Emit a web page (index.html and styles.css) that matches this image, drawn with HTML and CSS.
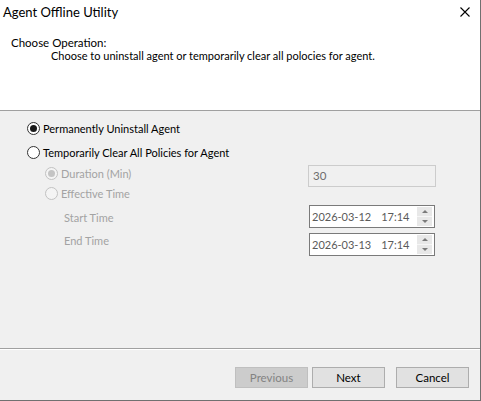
FILE: index.html
```html
<!DOCTYPE html>
<html>
<head>
<meta charset="utf-8">
<link rel="stylesheet" href="styles.css">
</head>
<body>
<div class="window">
  <div class="header">
    <div class="titlebar">
      <span class="title">Agent Offline Utility</span>
      <svg class="close" width="10" height="10" viewBox="0 0 10 10"><path d="M0.5 0.5 L9.5 9.5 M9.5 0.5 L0.5 9.5" stroke="#000" stroke-width="1.1" fill="none"/></svg>
    </div>
    <div class="heading">Choose Operation:</div>
    <div class="subheading">Choose to uninstall agent or temporarily clear all polocies for agent.</div>
  </div>
  <div class="content">
    <div class="left-col">
      <div class="row r1"><span class="radio checked"></span><span class="label">Permanently Uninstall Agent</span></div>
      <div class="row r2"><span class="radio"></span><span class="label">Temporarily Clear All Policies for Agent</span></div>
      <div class="row sub r3 disabled"><span class="radio checked"></span><span class="label">Duration (Min)</span></div>
      <div class="row sub r4 disabled"><span class="radio"></span><span class="label">Effective Time</span></div>
      <div class="row field r5 disabled"><span class="label">Start Time</span></div>
      <div class="row field r6 disabled"><span class="label">End Time</span></div>
    </div>
    <div class="right-col">
      <div class="textbox">30</div>
      <div class="datebox start"><span class="date">2026-03-12</span><span class="time">17:14</span><span class="spin"><span class="up"></span><span class="down"></span></span></div>
      <div class="datebox end"><span class="date">2026-03-13</span><span class="time">17:14</span><span class="spin"><span class="up"></span><span class="down"></span></span></div>
    </div>
  </div>
  <div class="footer">
    <button class="btn disabled">Previous</button>
    <button class="btn next">Next</button>
    <button class="btn cancel">Cancel</button>
  </div>
</div>
</body>
</html>
```

FILE: styles.css
```css
* { box-sizing: border-box; }
html, body { margin: 0; padding: 0; }
body {
  width: 481px;
  height: 401px;
  overflow: hidden;
  font-family: Lato, "Liberation Sans", sans-serif;
  font-size: 11px;
  color: #000;
  background: #f0f0f0;
}
.window {
  width: 481px;
  height: 401px;
  border-right: 1px solid #707070;
  border-bottom: 1px solid #707070;
  display: flex;
  flex-direction: column;
  background: #f0f0f0;
}
.header {
  height: 111px;
  flex: none;
  background: #fff;
  border-bottom: 1px solid #a0a0a0;
}
.titlebar {
  height: 24px;
  display: flex;
  align-items: center;
  justify-content: space-between;
  padding-left: 3px;
  padding-right: 10px;
}
.title { font-size: 13px; line-height: 16px; }
.close { display: block; }
.heading {
  margin-top: 12px;
  padding-left: 11px;
  line-height: 13px;
  font-size: 11.5px;
}
.subheading {
  padding-left: 51px;
  line-height: 13px;
  font-size: 11px;
}
.content {
  height: 237px;
  flex: none;
  display: flex;
  padding-left: 27px;
}
.left-col { padding-top: 7px; }
.row {
  display: flex;
  align-items: center;
  height: 20px;
  white-space: nowrap;
}
.r1 { height: 21px; }
.r2 { height: 21px; margin-top: 3px; }
.r3 { margin-top: 0; }
.r5 { margin-top: 4px; }
.r6 { margin-top: 3px; }
.sub { padding-left: 18px; }
.field { padding-left: 37px; }
.label { font-size: 11px; }
.radio {
  position: relative;
  width: 13px;
  height: 13px;
  border-radius: 50%;
  border: 1px solid #333;
  background: #fff;
  flex: none;
  margin-right: 3px;
}
.radio.checked::after {
  content: "";
  position: absolute;
  left: 2px;
  top: 2px;
  width: 7px;
  height: 7px;
  border-radius: 50%;
  background: #1a1a1a;
}
.disabled .label { color: #a3a3a3; }
.disabled .radio { border-color: #c2c2c2; background: #f4f4f4; }
.disabled .radio.checked::after { background: #c4c4c4; }
.right-col {
  margin-left: auto;
  margin-right: 44px;
  width: 128px;
}
.textbox {
  margin-top: 54px;
  height: 22px;
  border: 1px solid #cccccc;
  background: #f0f0f0;
  color: #6d6d6d;
  padding-left: 4px;
  line-height: 20px;
  font-size: 11.5px;
}
.datebox {
  margin-left: 1px;
  width: 126px;
  height: 23px;
  border: 1px solid #7a7a7a;
  background: #fff;
  display: flex;
  align-items: center;
  padding: 0 2px 0 2px;
  color: #5a5a5a;
  font-size: 11px;
}
.datebox.start { margin-top: 18px; }
.datebox.end { margin-top: 5px; }
.date { flex: none; }
.time { flex: 1; margin-left: 10px; }
.spin {
  width: 15px;
  height: 19px;
  display: flex;
  flex-direction: column;
  background: #e8e8e8;
}
.spin span {
  flex: 1;
  position: relative;
}
.spin .up { border-bottom: 1px solid #f6f6f6; }
.spin .up::after,
.spin .down::after {
  content: "";
  position: absolute;
  left: 5px;
  width: 0;
  height: 0;
  border-left: 3px solid transparent;
  border-right: 3px solid transparent;
}
.spin .up::after { top: 3px; border-bottom: 3px solid #7a7a7a; }
.spin .down::after { top: 3px; border-top: 3px solid #7a7a7a; }
.footer {
  flex: 1;
  border-top: 1px solid #a0a0a0;
  box-shadow: inset 0 1px 0 #ffffff;
  display: flex;
  justify-content: flex-end;
  align-items: flex-start;
  padding-top: 18px;
  padding-right: 11px;
}
.btn {
  width: 73px;
  height: 21px;
  margin: 0 0 0 4px;
  padding: 0;
  border: 1px solid #adadad;
  background: #e1e1e1;
  font-family: inherit;
  font-size: 11.5px;
  color: #000;
}
.btn.cancel { margin-left: 11px; }
.btn.disabled {
  background: #cccccc;
  border-color: #bfbfbf;
  color: #838383;
}
```
